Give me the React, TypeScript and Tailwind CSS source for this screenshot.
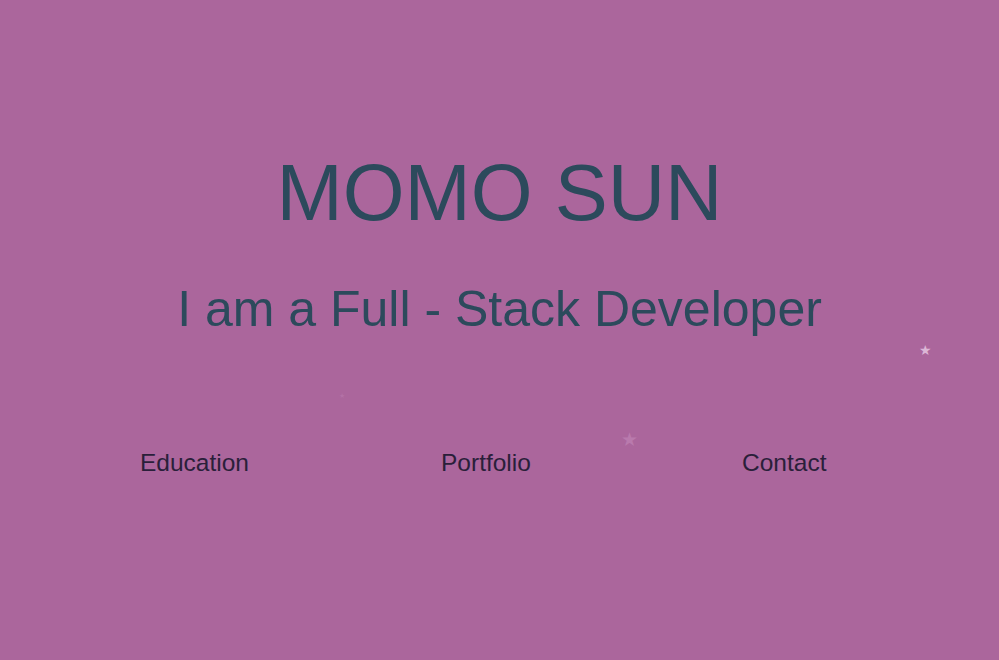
import React from 'react';

const NAV = ['Education', 'Portfolio', 'Contact'];

export default function App() {
  return (
    <div className="relative h-[660px] w-full overflow-hidden bg-[#ab669c] font-['Liberation_Sans',Arial,sans-serif]">
      {/* Stars */}
      <span className="absolute left-[919px] top-[343px] text-[14px] leading-none text-[#dcb6d6]">★</span>
      <span className="absolute left-[621px] top-[430px] text-[19px] leading-none text-[#b97aad]">★</span>
      <span className="absolute left-[339px] top-[392px] text-[7px] leading-none text-[#b371a6]">★</span>

      <div className="flex flex-col items-center pt-[153px]">
        <h1 className="text-[79.5px] leading-none font-normal text-[#2c4a5c]">MOMO SUN</h1>
        <h2 className="mt-[51px] text-[50px] leading-none font-normal text-[#2c4a5c]">I am a Full - Stack Developer</h2>
      </div>

      <nav className="mt-[117px] grid grid-cols-[301px_301px_auto] pl-[140px]">
        {NAV.map(item => (
          <a key={item} href="#" className="text-[24.5px] leading-none text-[#2a1f3a]">
            {item}
          </a>
        ))}
      </nav>
    </div>
  );
}
